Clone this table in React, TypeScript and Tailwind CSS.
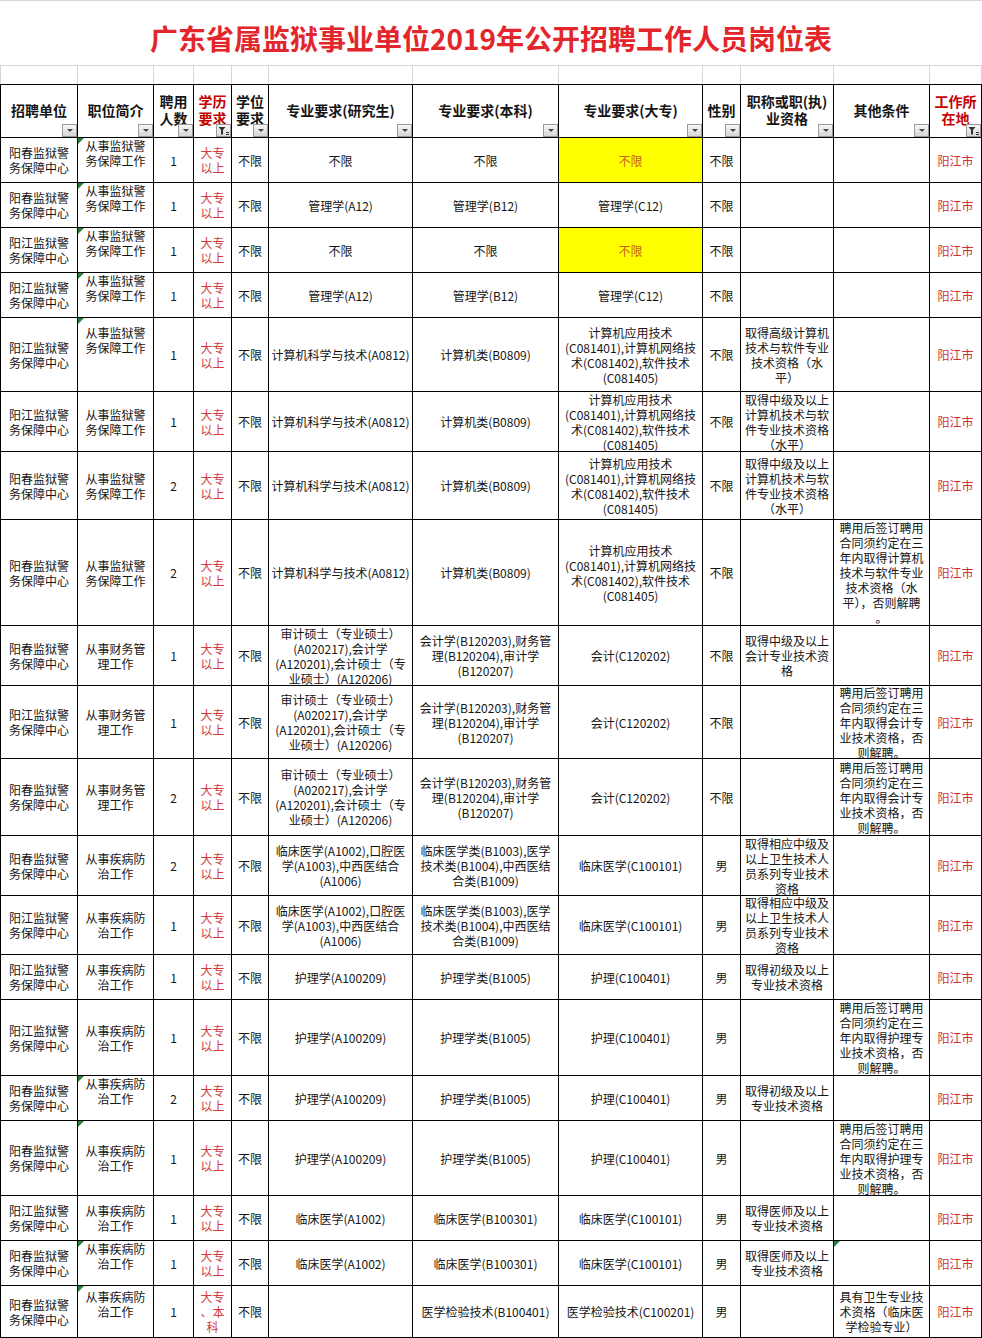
import React from 'react';
import clsx from 'clsx';

const COLS =
  'grid grid-cols-[76px_75px_39px_37px_36px_143px_145px_143px_37px_92px_95px_51px] gap-px';

type Row = {
  h: string;
  unit: '阳春' | '阳江';
  job: string[];
  n: string;
  edu?: string[];
  pg: string[];
  ug: string[];
  jc: string[];
  sex: string;
  title?: string[];
  other?: string[];
  yellow?: boolean;
  mark?: boolean;
  jobAlign?: string;
  otherMark?: boolean;
};

const JOB_GUARD = ['从事监狱警', '务保障工作'];
const JOB_FIN = ['从事财务管', '理工作'];
const JOB_MED = ['从事疾病防', '治工作'];

const CS_PG = ['计算机科学与技术(A0812)'];
const CS_UG = ['计算机类(B0809)'];
const CS_JC = ['计算机应用技术', '(C081401),计算机网络技', '术(C081402),软件技术', '(C081405)'];
const FIN_PG = ['审计硕士（专业硕士）', '(A020217),会计学', '(A120201),会计硕士（专', '业硕士）(A120206)'];
const FIN_UG = ['会计学(B120203),财务管', '理(B120204),审计学', '(B120207)'];
const MED_PG = ['临床医学(A1002),口腔医', '学(A1003),中西医结合', '(A1006)'];
const MED_UG = ['临床医学类(B1003),医学', '技术类(B1004),中西医结', '合类(B1009)'];

const MID_CS = ['取得中级及以上', '计算机技术与软', '件专业技术资格', '（水平）'];
const MED_TITLE = ['取得相应中级及', '以上卫生技术人', '员系列专业技术', '资格'];
const JUNIOR = ['取得初级及以上', '专业技术资格'];
const DOCTOR = ['取得医师及以上', '专业技术资格'];

const HIRE_CS = ['聘用后签订聘用', '合同须约定在三', '年内取得计算机', '技术与软件专业', '技术资格（水', '平），否则解聘', '。'];
const HIRE_FIN = ['聘用后签订聘用', '合同须约定在三', '年内取得会计专', '业技术资格，否', '则解聘。'];
const HIRE_NURSE = ['聘用后签订聘用', '合同须约定在三', '年内取得护理专', '业技术资格，否', '则解聘。'];

const rows: Row[] = [
  { h: 'h-[44px]', unit: '阳春', job: JOB_GUARD, n: '1', pg: ['不限'], ug: ['不限'], jc: ['不限'], sex: '不限', yellow: true, mark: true, jobAlign: 'justify-start' },
  { h: 'h-[44px]', unit: '阳春', job: JOB_GUARD, n: '1', pg: ['管理学(A12)'], ug: ['管理学(B12)'], jc: ['管理学(C12)'], sex: '不限', mark: true, jobAlign: 'justify-start' },
  { h: 'h-[44px]', unit: '阳江', job: JOB_GUARD, n: '1', pg: ['不限'], ug: ['不限'], jc: ['不限'], sex: '不限', yellow: true, mark: true, jobAlign: 'justify-start' },
  { h: 'h-[44px]', unit: '阳江', job: JOB_GUARD, n: '1', pg: ['管理学(A12)'], ug: ['管理学(B12)'], jc: ['管理学(C12)'], sex: '不限', mark: true, jobAlign: 'justify-start' },
  { h: 'h-[73px]', unit: '阳江', job: JOB_GUARD, n: '1', pg: CS_PG, ug: CS_UG, jc: CS_JC, sex: '不限', title: ['取得高级计算机', '技术与软件专业', '技术资格（水', '平）'], mark: true, jobAlign: 'justify-start pt-[7px]' },
  { h: 'h-[59px]', unit: '阳江', job: JOB_GUARD, n: '1', pg: CS_PG, ug: CS_UG, jc: CS_JC, sex: '不限', title: MID_CS },
  { h: 'h-[67px]', unit: '阳春', job: JOB_GUARD, n: '2', pg: CS_PG, ug: CS_UG, jc: CS_JC, sex: '不限', title: MID_CS },
  { h: 'h-[105px]', unit: '阳春', job: JOB_GUARD, n: '2', pg: CS_PG, ug: CS_UG, jc: CS_JC, sex: '不限', other: HIRE_CS },
  { h: 'h-[59px]', unit: '阳春', job: JOB_FIN, n: '1', pg: FIN_PG, ug: FIN_UG, jc: ['会计(C120202)'], sex: '不限', title: ['取得中级及以上', '会计专业技术资', '格'] },
  { h: 'h-[72px]', unit: '阳江', job: JOB_FIN, n: '1', pg: FIN_PG, ug: FIN_UG, jc: ['会计(C120202)'], sex: '不限', other: HIRE_FIN },
  { h: 'h-[76px]', unit: '阳春', job: JOB_FIN, n: '2', pg: FIN_PG, ug: FIN_UG, jc: ['会计(C120202)'], sex: '不限', other: HIRE_FIN },
  { h: 'h-[59px]', unit: '阳春', job: JOB_MED, n: '2', pg: MED_PG, ug: MED_UG, jc: ['临床医学(C100101)'], sex: '男', title: MED_TITLE },
  { h: 'h-[58px]', unit: '阳江', job: JOB_MED, n: '1', pg: MED_PG, ug: MED_UG, jc: ['临床医学(C100101)'], sex: '男', title: MED_TITLE },
  { h: 'h-[44px]', unit: '阳江', job: JOB_MED, n: '1', pg: ['护理学(A100209)'], ug: ['护理学类(B1005)'], jc: ['护理(C100401)'], sex: '男', title: JUNIOR },
  { h: 'h-[75px]', unit: '阳江', job: JOB_MED, n: '1', pg: ['护理学(A100209)'], ug: ['护理学类(B1005)'], jc: ['护理(C100401)'], sex: '男', other: HIRE_NURSE },
  { h: 'h-[44px]', unit: '阳春', job: JOB_MED, n: '2', pg: ['护理学(A100209)'], ug: ['护理学类(B1005)'], jc: ['护理(C100401)'], sex: '男', title: JUNIOR, mark: true, jobAlign: 'justify-start' },
  { h: 'h-[74px]', unit: '阳春', job: JOB_MED, n: '1', pg: ['护理学(A100209)'], ug: ['护理学类(B1005)'], jc: ['护理(C100401)'], sex: '男', other: HIRE_NURSE, mark: true },
  { h: 'h-[44px]', unit: '阳江', job: JOB_MED, n: '1', pg: ['临床医学(A1002)'], ug: ['临床医学(B100301)'], jc: ['临床医学(C100101)'], sex: '男', title: DOCTOR },
  { h: 'h-[44px]', unit: '阳春', job: JOB_MED, n: '1', pg: ['临床医学(A1002)'], ug: ['临床医学(B100301)'], jc: ['临床医学(C100101)'], sex: '男', title: DOCTOR, mark: true, jobAlign: 'justify-start', otherMark: true },
  { h: 'h-[51px]', unit: '阳春', job: JOB_MED, n: '1', edu: ['大专', '、本', '科'], pg: [], ug: ['医学检验技术(B100401)'], jc: ['医学检验技术(C100201)'], sex: '男', other: ['具有卫生专业技', '术资格（临床医', '学检验专业）'], mark: true, jobAlign: 'justify-start pt-[3px]' },
];

const headers: { lines: string[]; red?: boolean; filter?: boolean }[] = [
  { lines: ['招聘单位'] },
  { lines: ['职位简介'] },
  { lines: ['聘用', '人数'] },
  { lines: ['学历', '要求'], red: true, filter: true },
  { lines: ['学位', '要求'] },
  { lines: ['专业要求(研究生)'] },
  { lines: ['专业要求(本科)'] },
  { lines: ['专业要求(大专)'] },
  { lines: ['性别'] },
  { lines: ['职称或职(执)', '业资格'] },
  { lines: ['其他条件'] },
  { lines: ['工作所', '在地'], red: true, filter: true },
];

function Mark() {
  return (
    <svg className="absolute left-0 top-0" width="6" height="6" viewBox="0 0 6 6">
      <polygon points="0,0 6,0 0,6" fill="#24803a" />
    </svg>
  );
}

function FilterButton({ active }: { active?: boolean }) {
  return (
    <div className="absolute right-0 bottom-0 w-[15px] h-[13px] border border-[#9a9a9a] bg-linear-to-b from-[#f7f7f7] to-[#d6d6d6] flex items-center justify-center">
      {active ? (
        <svg width="13" height="11" viewBox="0 0 13 11">
          <path d="M1.5 2 H8.5 L6 5 V9.5 H4 V5 Z" fill="#333" />
          <rect x="9" y="7" width="3" height="1" fill="#333" />
          <rect x="9" y="9" width="3" height="1" fill="#333" />
        </svg>
      ) : (
        <svg width="8" height="5" viewBox="0 0 8 5">
          <polygon points="1,1 7,1 4,4" fill="#444" />
        </svg>
      )}
    </div>
  );
}

function Cell({
  lines,
  className,
  mark,
}: {
  lines: string[];
  className?: string;
  mark?: boolean;
}) {
  return (
    <div
      className={clsx(
        'relative flex flex-col items-center overflow-hidden whitespace-nowrap text-center',
        className ?? 'justify-center',
        !className?.includes('bg-') && 'bg-white'
      )}
    >
      {mark && <Mark />}
      {lines.map((l, i) => (
        <span key={i}>{l}</span>
      ))}
    </div>
  );
}

export default function App() {
  return (
    <div className="w-[982px] bg-white text-[#151515] font-['Noto_Sans_CJK_SC','Liberation_Sans',sans-serif]">
      {/* Title */}
      <div className="h-[65px] border-t border-[#d6d6d6] flex items-center justify-center pt-[9px]">
        <h1 className="text-[28px] leading-[32px] font-bold text-[#e2262b] tracking-[0px]">
          广东省属监狱事业单位2019年公开招聘工作人员岗位表
        </h1>
      </div>

      {/* blank spreadsheet row */}
      <div className={clsx(COLS, 'bg-[#d6d6d6] px-px pt-px')}>
        {headers.map((_, i) => (
          <div key={i} className="h-[18px] bg-white" />
        ))}
      </div>

      {/* Table */}
      <div className="bg-black p-px flex flex-col gap-px">
        <div className={clsx(COLS, 'h-[52px]')}>
          {headers.map((hd, i) => (
            <div
              key={i}
              className={clsx(
                'relative bg-white flex flex-col items-center justify-center text-center whitespace-nowrap text-[14px] leading-[17px] font-bold pb-[2px]',
                hd.red && 'text-[#c40000]'
              )}
            >
              {hd.lines.map((l) => (
                <span key={l}>{l}</span>
              ))}
              <FilterButton active={hd.filter} />
            </div>
          ))}
        </div>

        {rows.map((r, i) => (
          <div key={i} className={clsx(COLS, r.h, 'text-[12px] leading-[15px]')}>
            <Cell lines={[`${r.unit}监狱警`, '务保障中心']} />
            <Cell lines={r.job} mark={r.mark} className={r.jobAlign} />
            <Cell lines={[r.n]} />
            <Cell lines={r.edu ?? ['大专', '以上']} className="justify-center text-[#d43a3f]" />
            <Cell lines={['不限']} />
            <Cell lines={r.pg} />
            <Cell lines={r.ug} />
            <Cell
              lines={r.jc}
              className={r.yellow ? 'justify-center bg-[#ffff00] text-[#c8621e]' : undefined}
            />
            <Cell lines={[r.sex]} />
            <Cell lines={r.title ?? []} />
            <Cell lines={r.other ?? []} mark={r.otherMark} />
            <Cell lines={['阳江市']} className="justify-center text-[#cf2f34]" />
          </div>
        ))}
      </div>
    </div>
  );
}
